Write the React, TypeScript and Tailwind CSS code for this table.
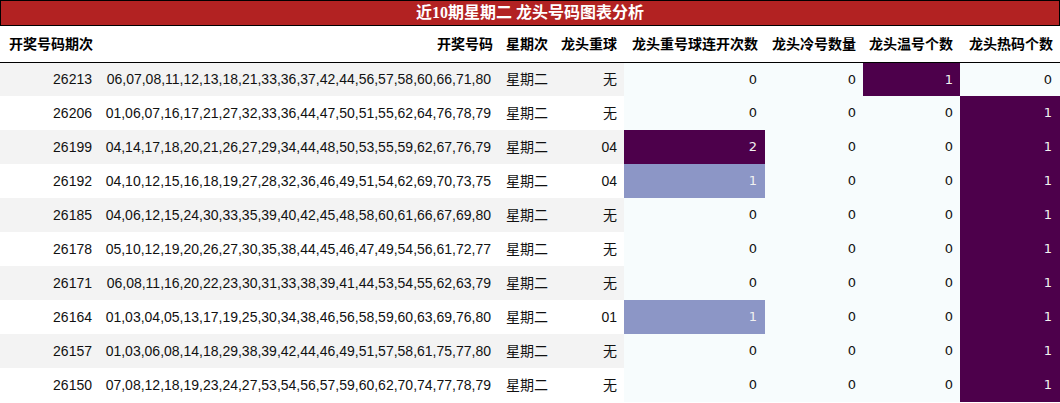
import React from 'react';

type Row = {
  issue: string;
  nums: string;
  week: string;
  repeat: string;
  streak: number;
  cold: number;
  warm: number;
  hot: number;
};

const rows: Row[] = [
  { issue: '26213', nums: '06,07,08,11,12,13,18,21,33,36,37,42,44,56,57,58,60,66,71,80', week: '星期二', repeat: '无', streak: 0, cold: 0, warm: 1, hot: 0 },
  { issue: '26206', nums: '01,06,07,16,17,21,27,32,33,36,44,47,50,51,55,62,64,76,78,79', week: '星期二', repeat: '无', streak: 0, cold: 0, warm: 0, hot: 1 },
  { issue: '26199', nums: '04,14,17,18,20,21,26,27,29,34,44,48,50,53,55,59,62,67,76,79', week: '星期二', repeat: '04', streak: 2, cold: 0, warm: 0, hot: 1 },
  { issue: '26192', nums: '04,10,12,15,16,18,19,27,28,32,36,46,49,51,54,62,69,70,73,75', week: '星期二', repeat: '04', streak: 1, cold: 0, warm: 0, hot: 1 },
  { issue: '26185', nums: '04,06,12,15,24,30,33,35,39,40,42,45,48,58,60,61,66,67,69,80', week: '星期二', repeat: '无', streak: 0, cold: 0, warm: 0, hot: 1 },
  { issue: '26178', nums: '05,10,12,19,20,26,27,30,35,38,44,45,46,47,49,54,56,61,72,77', week: '星期二', repeat: '无', streak: 0, cold: 0, warm: 0, hot: 1 },
  { issue: '26171', nums: '06,08,11,16,20,22,23,30,31,33,38,39,41,44,53,54,55,62,63,79', week: '星期二', repeat: '无', streak: 0, cold: 0, warm: 0, hot: 1 },
  { issue: '26164', nums: '01,03,04,05,13,17,19,25,30,34,38,46,56,58,59,60,63,69,76,80', week: '星期二', repeat: '01', streak: 1, cold: 0, warm: 0, hot: 1 },
  { issue: '26157', nums: '01,03,06,08,14,18,29,38,39,42,44,46,49,51,57,58,61,75,77,80', week: '星期二', repeat: '无', streak: 0, cold: 0, warm: 0, hot: 1 },
  { issue: '26150', nums: '07,08,12,18,19,23,24,27,53,54,56,57,59,60,62,70,74,77,78,79', week: '星期二', repeat: '无', streak: 0, cold: 0, warm: 0, hot: 1 },
];

// BuPu style shading: 0 light, max dark
function shade(v: number, max: number) {
  if (v === 0 || max === 0) return 'bg-[#f7fcfd] text-[#111]';
  if (v >= max) return 'bg-[#4d004b] text-[#f1f1f1]';
  return 'bg-[#8c96c6] text-[#f1f1f1]';
}

const maxStreak = Math.max(...rows.map((r) => r.streak));
const maxCold = Math.max(...rows.map((r) => r.cold));
const maxWarm = Math.max(...rows.map((r) => r.warm));
const maxHot = Math.max(...rows.map((r) => r.hot));

const heads = ['开奖号码期次', '开奖号码', '星期次', '龙头重球', '龙头重号球连开次数', '龙头冷号数量', '龙头温号个数', '龙头热码个数'];

export default function App() {
  return (
    <div className="w-[1060px] h-[403px] bg-white overflow-hidden font-['Liberation_Sans','Noto_Sans_CJK_SC',sans-serif]">
      {/* Title */}
      <div className="h-[26px] bg-[#b22222] border border-black flex items-center justify-center text-white font-bold text-[16px] font-['Liberation_Serif','Noto_Sans_CJK_SC',sans-serif]">
        近10期星期二 龙头号码图表分析
      </div>

      <table className="w-[1060px] border-collapse table-fixed">
        <colgroup>
          <col className="w-[100px]" />
          <col className="w-[400px]" />
          <col className="w-[55px]" />
          <col className="w-[69px]" />
          <col className="w-[141px]" />
          <col className="w-[98px]" />
          <col className="w-[97px]" />
          <col className="w-[100px]" />
        </colgroup>
        <thead>
          <tr className="h-[36px] border-b border-black">
            {heads.map((h) => (
              <th key={h} className="text-right pr-[7px] text-[14px] font-bold text-black whitespace-nowrap font-['Noto_Sans_CJK_SC',sans-serif]">
                {h}
              </th>
            ))}
          </tr>
        </thead>
        <tbody>
          {rows.map((r, i) => (
            <tr key={r.issue} className={`h-[34px] text-[14px] text-[#111] ${i % 2 === 0 ? 'bg-[#f3f3f3]' : 'bg-white'}`}>
              <td className="text-right pr-[8px]">{r.issue}</td>
              <td className="text-right pr-[9px] whitespace-nowrap">{r.nums}</td>
              <td className="text-right pr-[7px]">{r.week}</td>
              <td className="text-right pr-[7px]">{r.repeat}</td>
              <td className={`text-right pr-[8px] text-[13px] font-['DejaVu_Sans',sans-serif] ${shade(r.streak, maxStreak)}`}>{r.streak}</td>
              <td className={`text-right pr-[7px] text-[13px] font-['DejaVu_Sans',sans-serif] ${shade(r.cold, maxCold)}`}>{r.cold}</td>
              <td className={`text-right pr-[7px] text-[13px] font-['DejaVu_Sans',sans-serif] ${shade(r.warm, maxWarm)}`}>{r.warm}</td>
              <td className={`text-right pr-[8px] text-[13px] font-['DejaVu_Sans',sans-serif] ${shade(r.hot, maxHot)}`}>{r.hot}</td>
            </tr>
          ))}
        </tbody>
      </table>
    </div>
  );
}
